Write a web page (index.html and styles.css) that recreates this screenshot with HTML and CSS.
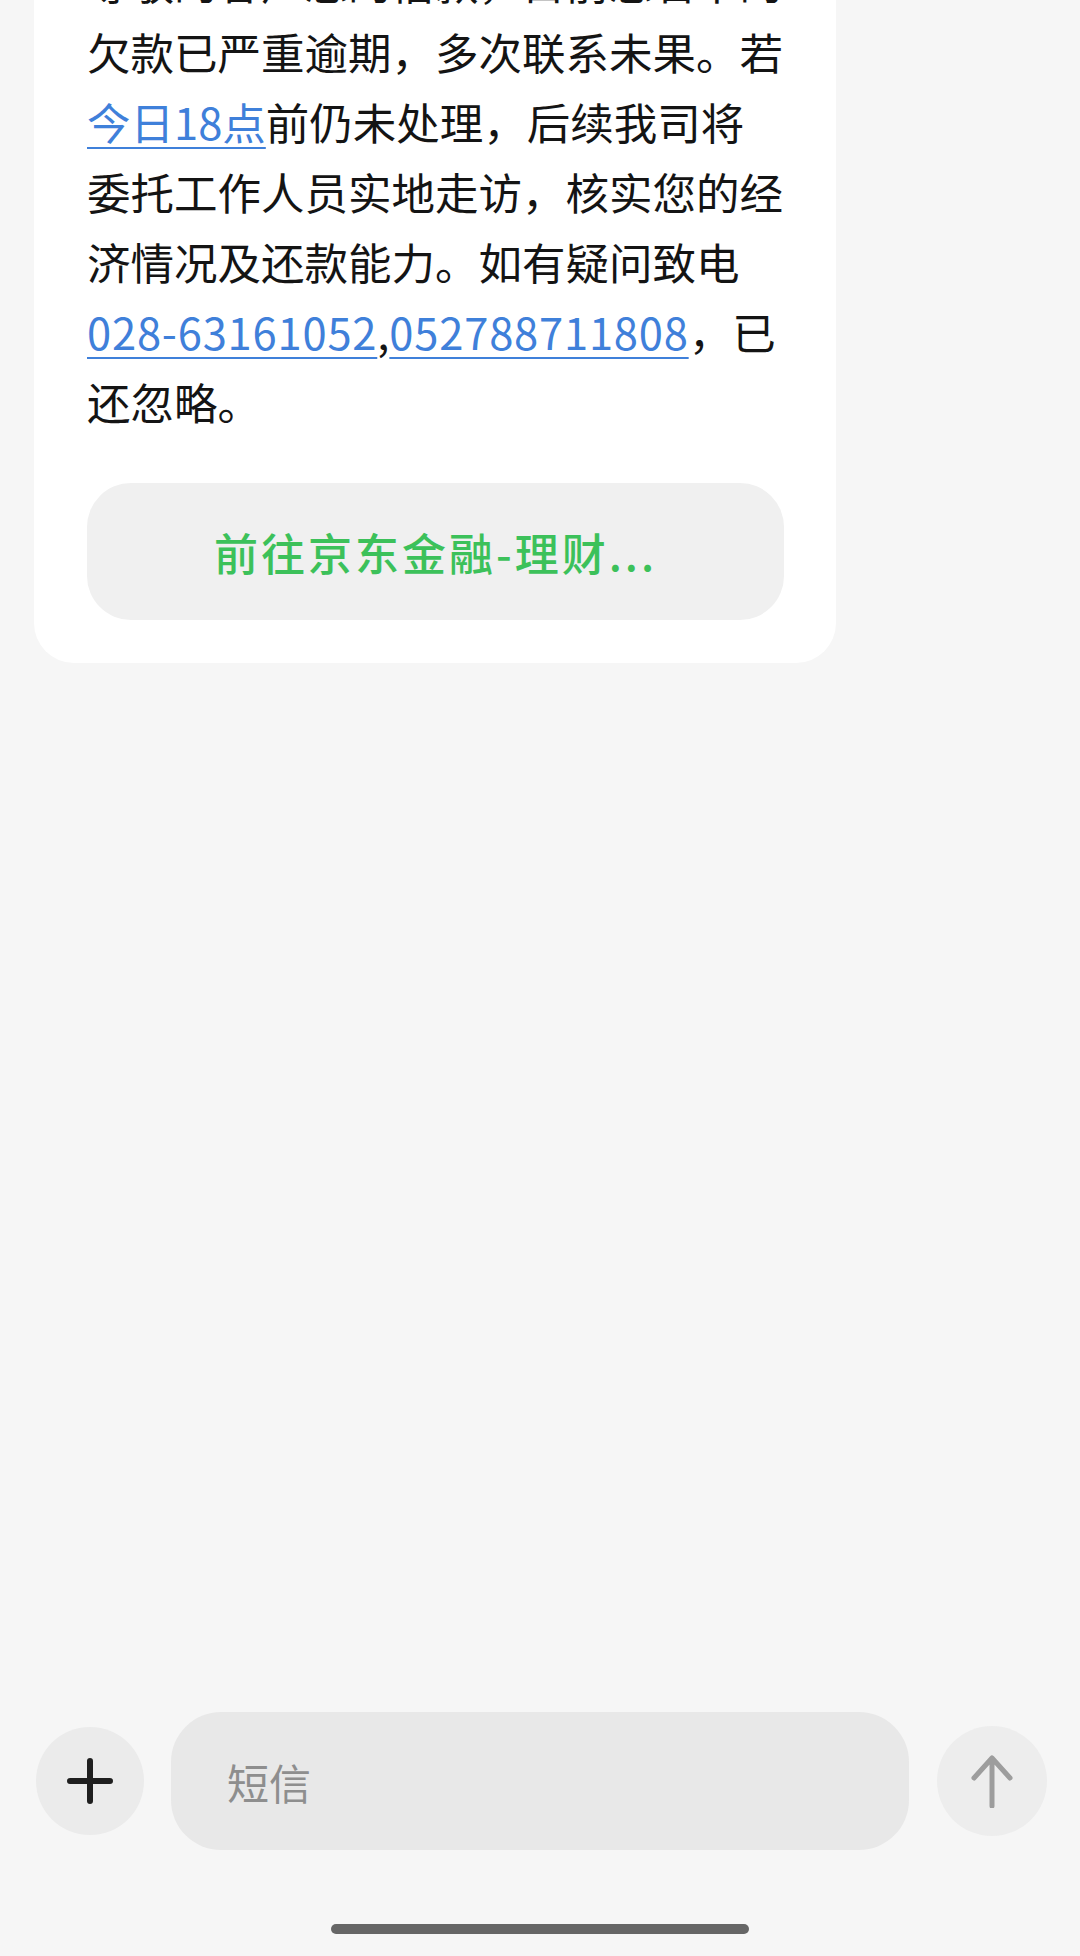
FILE: index.html
```html
<!DOCTYPE html>
<html lang="zh-CN">
<head>
  <meta charset="UTF-8">
  <meta name="viewport" content="width=device-width, initial-scale=1.0">
  <title>短信</title>
  <link rel="stylesheet" href="styles.css">
</head>
<body>
  <div class="screen">
    <div class="thread">
      <div class="bubble">
        <p class="msg-text">尊敬的客户您的借款，目前您名下的<br>欠款已严重逾期，多次联系未果。若<br><a class="link" href="#">今日18点</a>前仍未处理，后续我司将<br>委托工作人员实地走访，核实您的经<br>济情况及还款能力。如有疑问致电<br><a class="link num" href="#">028-63161052</a>,<a class="link num" href="#">052788711808</a>，已<br>还忽略。</p>
        <button class="action">前往京东金融-理财...</button>
      </div>
    </div>

    <div class="composer">
      <button class="round-btn add">
        <svg width="46" height="46" viewBox="0 0 46 46">
          <path d="M23 3v40M3 23h40" stroke="#1f1f1f" stroke-width="6" stroke-linecap="round" fill="none"/>
        </svg>
      </button>
      <div class="input">短信</div>
      <button class="round-btn send">
        <svg width="46" height="54" viewBox="0 0 46 54">
          <path d="M23 4v48M5 24L23 4l18 20" stroke="#9d9d9d" stroke-width="5" stroke-linecap="round" stroke-linejoin="round" fill="none"/>
        </svg>
      </button>
    </div>

    <div class="home-bar"><span></span></div>
  </div>
</body>
</html>
```

FILE: styles.css
```css
body {
  margin: 0;
  padding: 0;
  background-color: #f6f6f6;
  font-family: "Noto Sans CJK SC", "Noto Sans", sans-serif;
}

.screen {
  height: 1956px;
  display: flex;
  flex-direction: column;
  overflow: hidden;
}

.thread {
  flex: 1;
  overflow: hidden;
}

.bubble {
  width: 697px;
  margin: -80px 0 0 34px;
  padding: 27px 52px 43px 53px;
  background-color: #fff;
  border-radius: 0 0 40px 40px;
}

.msg-text {
  margin: 0;
  font-size: 43.5px;
  line-height: 70px;
  color: #141414;
  white-space: nowrap;
}

.link {
  color: #3f80da;
  text-decoration: underline;
  text-decoration-thickness: 2px;
  text-underline-offset: 7px;
}

.num {
  letter-spacing: 0.8px;
}

.action {
  display: block;
  width: 100%;
  height: 137px;
  margin-top: 46px;
  border: none;
  border-radius: 44px;
  background-color: #f0f0f0;
  color: #3cc15a;
  font-family: inherit;
  font-size: 44px;
  font-weight: 500;
  letter-spacing: 3px;
  cursor: pointer;
}

.composer {
  display: flex;
  align-items: center;
  padding: 0 33px 0 36px;
  height: 138px;
  margin-bottom: 74px;
}

.round-btn {
  flex: none;
  width: 108px;
  height: 108px;
  border: none;
  border-radius: 50%;
  background-color: #ebebeb;
  display: flex;
  align-items: center;
  justify-content: center;
  padding: 0;
}

.send {
  width: 110px;
  height: 110px;
  background-color: #ededed;
}

.input {
  flex: 1;
  height: 138px;
  margin: 0 28px 0 27px;
  border-radius: 50px;
  background-color: #e8e8e8;
  display: flex;
  align-items: center;
  padding-left: 56px;
  font-size: 42px;
  color: #8e8e8e;
}

.home-bar {
  height: 32px;
  display: flex;
  justify-content: center;
}

.home-bar span {
  width: 418px;
  height: 10px;
  border-radius: 5px;
  background-color: #666;
}
```
